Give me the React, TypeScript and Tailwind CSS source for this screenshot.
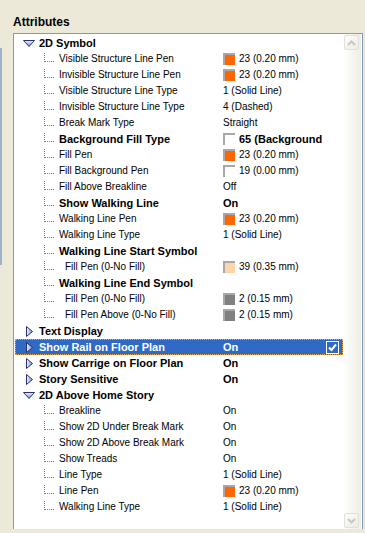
import React from 'react';

type Row = {
    name: string;
    level: 0 | 1 | 2;
    open?: boolean;
    bold?: boolean;
    value?: string;
    valueBold?: boolean;
    swatch?: string;
    selected?: boolean;
};

const ORANGE = '#ff6600';
const PEACH = '#ffd5a8';
const GRAY = '#808080';
const WHITE = '#ffffff';

const rows: Row[] = [
    { name: '2D Symbol', level: 0, open: true },
    { name: 'Visible Structure Line Pen', level: 1, swatch: ORANGE, value: '23 (0.20 mm)' },
    { name: 'Invisible Structure Line Pen', level: 1, swatch: ORANGE, value: '23 (0.20 mm)' },
    { name: 'Visible Structure Line Type', level: 1, value: '1 (Solid Line)' },
    { name: 'Invisible Structure Line Type', level: 1, value: '4 (Dashed)' },
    { name: 'Break Mark Type', level: 1, value: 'Straight' },
    { name: 'Background Fill Type', level: 1, bold: true, swatch: WHITE, value: '65 (Background Pen)', valueBold: true },
    { name: 'Fill Pen', level: 1, swatch: ORANGE, value: '23 (0.20 mm)' },
    { name: 'Fill Background Pen', level: 1, swatch: WHITE, value: '19 (0.00 mm)' },
    { name: 'Fill Above Breakline', level: 1, value: 'Off' },
    { name: 'Show Walking Line', level: 1, bold: true, value: 'On', valueBold: true },
    { name: 'Walking Line Pen', level: 1, swatch: ORANGE, value: '23 (0.20 mm)' },
    { name: 'Walking Line Type', level: 1, value: '1 (Solid Line)' },
    { name: 'Walking Line Start Symbol', level: 1, bold: true },
    { name: 'Fill Pen (0-No Fill)', level: 2, swatch: PEACH, value: '39 (0.35 mm)' },
    { name: 'Walking Line End Symbol', level: 1, bold: true },
    { name: 'Fill Pen (0-No Fill)', level: 2, swatch: GRAY, value: '2 (0.15 mm)' },
    { name: 'Fill Pen Above (0-No Fill)', level: 2, swatch: GRAY, value: '2 (0.15 mm)' },
    { name: 'Text Display', level: 0, open: false },
    { name: 'Show Rail on Floor Plan', level: 0, open: false, value: 'On', valueBold: true, selected: true },
    { name: 'Show Carrige on Floor Plan', level: 0, open: false, value: 'On', valueBold: true },
    { name: 'Story Sensitive', level: 0, open: false, value: 'On', valueBold: true },
    { name: '2D Above Home Story', level: 0, open: true },
    { name: 'Breakline', level: 1, value: 'On' },
    { name: 'Show 2D Under Break Mark', level: 1, value: 'On' },
    { name: 'Show 2D Above Break Mark', level: 1, value: 'On' },
    { name: 'Show Treads', level: 1, value: 'On' },
    { name: 'Line Type', level: 1, value: '1 (Solid Line)' },
    { name: 'Line Pen', level: 1, swatch: ORANGE, value: '23 (0.20 mm)' },
    { name: 'Walking Line Type', level: 1, value: '1 (Solid Line)' },
];

const Toggle = ({ open }: { open: boolean }) =>
    open ? (
        <svg width="12" height="7" viewBox="0 0 12 7">
            <defs>
                <linearGradient id="triDown" x1="0" y1="0" x2="0" y2="1">
                    <stop offset="0" stopColor="#eef0ff" />
                    <stop offset="1" stopColor="#7d88cc" />
                </linearGradient>
            </defs>
            <polygon points="0.5,0.5 11.5,0.5 6,6.5" fill="url(#triDown)" stroke="#27336e" strokeWidth="1" />
        </svg>
    ) : (
        <svg width="7" height="11" viewBox="0 0 7 11">
            <defs>
                <linearGradient id="triRight" x1="0" y1="0" x2="1" y2="0">
                    <stop offset="0" stopColor="#eef0ff" />
                    <stop offset="1" stopColor="#8490d4" />
                </linearGradient>
            </defs>
            <polygon points="0.5,0.5 6.5,5.5 0.5,10.5" fill="url(#triRight)" stroke="#27336e" strokeWidth="1" />
        </svg>
    );

const Swatch = ({ color }: { color: string }) => (
    <span
        className="w-[12px] h-[12px] mr-[4px] shrink-0 border-t-2 border-l-2 border-[#a8a8a8]"
        style={{ backgroundColor: color }}
    />
);

const Check = () => (
    <span className="w-[13px] h-[13px] border border-white flex items-center justify-center">
        <svg width="9" height="9" viewBox="0 0 9 9">
            <path d="M1 4.5 L3.5 7 L8 1.5" fill="none" stroke="white" strokeWidth="2" />
        </svg>
    </span>
);

const TreeRow = ({ row }: { row: Row }) => {
    const textCls = row.bold || row.level === 0 ? 'font-bold text-[11px]' : 'text-[10px]';
    return (
        <div
            className={`h-[16px] mx-[1px] flex items-center border border-dotted ${
                row.selected ? 'bg-[#316ac5] text-white border-[#e6a648]' : 'border-transparent text-black'
            }`}
        >
            <div className="w-[203px] h-full flex items-center overflow-hidden whitespace-nowrap shrink-0">
                {row.level === 0 ? (
                    <>
                        <span className="ml-[7px] w-[12px] flex justify-center shrink-0">
                            <Toggle open={!!row.open} />
                        </span>
                        <span className={`ml-[4px] ${textCls}`}>{row.name}</span>
                    </>
                ) : (
                    <>
                        <span className="ml-[28px] w-[10px] h-[9px] self-start mt-[1px] shrink-0 border-l border-b border-dotted border-[#7a7a7a]" />
                        <span className={`${row.level === 2 ? 'ml-[11px]' : 'ml-[5px]'} ${textCls}`}>{row.name}</span>
                    </>
                )}
            </div>
            <div className="w-[103px] pl-[4px] h-full flex items-center overflow-hidden whitespace-nowrap shrink-0">
                {row.swatch && <Swatch color={row.swatch} />}
                {row.value && (
                    <span className={row.valueBold ? 'font-bold text-[11px]' : 'text-[10px]'}>{row.value}</span>
                )}
            </div>
            <div className="flex-1 pl-[4px] h-full flex items-center">{row.selected && <Check />}</div>
        </div>
    );
};

const ScrollButton = ({ up }: { up: boolean }) => (
    <div className="w-[15px] h-[15px] rounded-[2px] border border-[#e2e1d9] bg-linear-to-br from-[#fdfdfb] to-[#ecebe3] flex items-center justify-center">
        <svg width="9" height="6" viewBox="0 0 9 6">
            <path d={up ? 'M1 5 L4.5 1.5 L8 5' : 'M1 1 L4.5 4.5 L8 1'} fill="none" stroke="#c9c8bf" strokeWidth="2" />
        </svg>
    </div>
);

export default function App() {
    return (
        <div className="w-[365px] h-[533px] bg-[#ece9d8] flex font-['Liberation_Sans',Arial,sans-serif] overflow-hidden">
            <div className="w-[2px] h-[217px] mt-[48px] bg-[#9db1cb] shrink-0" />
            <div className="ml-[11px] flex flex-col">
                <div className="h-[33px] pt-[14px] text-[12px] leading-[16px] font-bold text-black">Attributes</div>
                <div className="w-[350px] h-[496px] border border-b-0 border-[#7f9db9] bg-white flex">
                    <div className="w-[330px] pt-[1px] flex flex-col leading-[16px]">
                        {rows.map((r, i) => (
                            <TreeRow key={i} row={r} />
                        ))}
                    </div>
                    <div className="w-[17px] flex flex-col justify-between pt-[1px] pb-[1px] bg-linear-to-r from-[#fefefc] to-[#eeede6]">
                        <ScrollButton up />
                        <ScrollButton up={false} />
                    </div>
                </div>
            </div>
        </div>
    );
}
